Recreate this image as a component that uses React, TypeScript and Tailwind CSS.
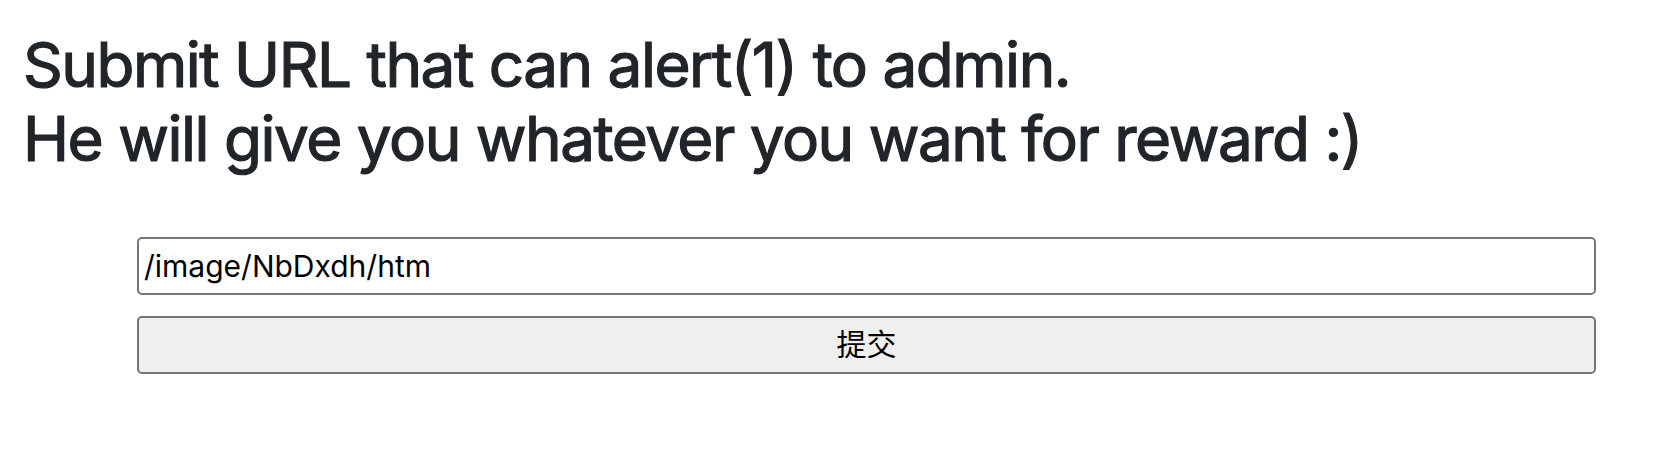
export default function App() {
  return (
    <div className="min-h-[452px] bg-white" style={{ fontFamily: 'Inter, "Noto Sans CJK SC", sans-serif' }}>
      <h1 className="pt-[28px] pl-[23px] text-[62px] font-normal leading-[1.2] tracking-[-0.024em] text-[#212529] [-webkit-text-stroke:1.2px_#212529]">
        Submit URL that can alert(1) to admin.
        <br />
        He will give you whatever you want for reward :)
      </h1>

      <form className="mt-[60px] ml-[137px] mr-[76px] flex flex-col gap-[21px]" onSubmit={(e) => e.preventDefault()}>
        <input
          type="text"
          defaultValue="/image/NbDxdh/htm"
          className="h-[58px] w-full rounded-[5px] border-2 border-[#767676] bg-white px-[5px] text-[30px] text-black outline-none"
        />
        <button
          type="submit"
          className="h-[58px] w-full rounded-[5px] border-2 border-[#767676] bg-[#efefef] text-[30px] text-black"
        >
          提交
        </button>
      </form>
    </div>
  )
}
